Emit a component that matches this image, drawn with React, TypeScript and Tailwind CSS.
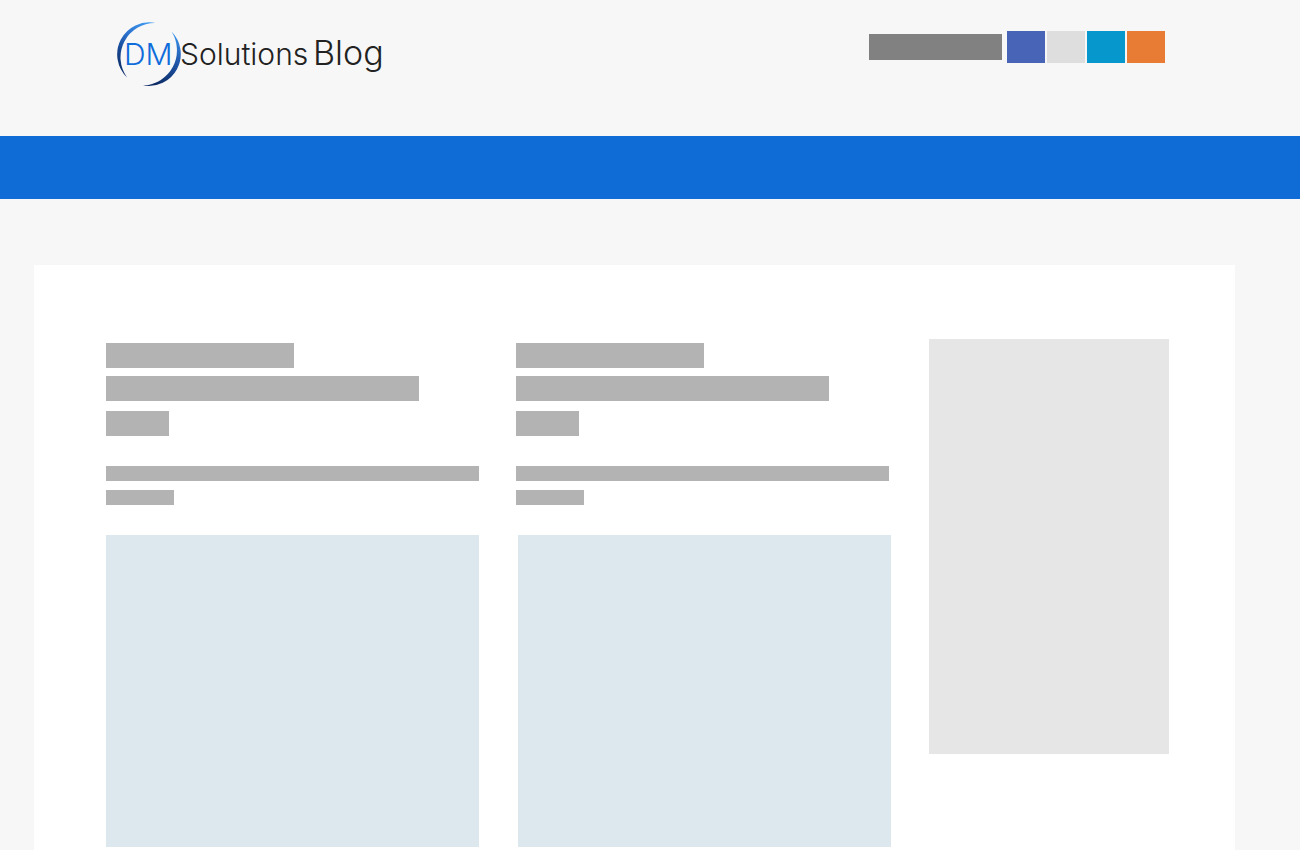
import { clsx } from "clsx"

function Block({ className }: { className?: string }) {
  return <div className={clsx("max-w-full", className)} />
}

function Logo() {
  return (
    <svg
      width="270"
      height="68"
      viewBox="0 0 270 68"
      role="img"
      aria-label="DM Solutions Blog"
      className="shrink-0"
    >
      <defs>
        <linearGradient id="arc-left" x1="0.8" y1="0" x2="0.2" y2="1">
          <stop offset="0" stopColor="#3f9af0" />
          <stop offset="0.4" stopColor="#2a70cc" />
          <stop offset="0.7" stopColor="#164590" />
          <stop offset="1" stopColor="#0d2c66" />
        </linearGradient>
        <linearGradient id="arc-right" x1="0.7" y1="0" x2="0.5" y2="1">
          <stop offset="0" stopColor="#3a94ec" />
          <stop offset="0.5" stopColor="#1f57ab" />
          <stop offset="1" stopColor="#0d2c66" />
        </linearGradient>
      </defs>
      <path d="M39 3A32 32 0 0 0 10.5 57.5A34.3 34.3 0 0 1 39 3Z" fill="url(#arc-left)" transform="translate(0.6 0)" />
      <path d="M55.5 11.5A32 32 0 0 1 27 65.5A35.2 35.2 0 0 0 55.5 11.5Z" fill="url(#arc-right)" />
      <g fontFamily="Inter, 'Liberation Sans', sans-serif" fontWeight="300">
        <text x="8" y="45" fontSize="30" fill="#0f6cdb">DM</text>
        <text x="64" y="45" fontSize="30" fill="#222222">Solutions</text>
        <text x="197" y="45" fontSize="34" fill="#222222">Blog</text>
      </g>
    </svg>
  )
}

function Header() {
  return (
    <header className="flex h-[136px] items-start justify-between pt-5 pr-[135px] pl-[116px]">
      <Logo />
      <div className="mt-[11px] flex items-center gap-[5px]">
        <Block className="h-[26px] w-[133px] bg-[#818181]" />
        <div className="flex gap-0.5">
          <Block className="h-8 w-[38px] bg-[#4864b6]" />
          <Block className="h-8 w-[38px] bg-[#dedede]" />
          <Block className="h-8 w-[38px] bg-[#0698cc]" />
          <Block className="h-8 w-[38px] bg-[#e87c34]" />
        </div>
      </div>
    </header>
  )
}

function PostSkeleton({ thumbClassName }: { thumbClassName?: string }) {
  return (
    <article className="min-w-0 pt-1">
      <Block className="h-[25px] w-[188px] bg-[#b3b3b3]" />
      <Block className="mt-2 h-[25px] w-[313px] bg-[#b3b3b3]" />
      <Block className="mt-2.5 h-[25px] w-[63px] bg-[#b3b3b3]" />
      <Block className="mt-[30px] h-[15px] w-[373px] bg-[#b3b3b3]" />
      <Block className="mt-[9px] h-[15px] w-[68px] bg-[#b3b3b3]" />
      <Block className={clsx("mt-[30px] h-[312px] bg-[#dde8ee]", thumbClassName)} />
    </article>
  )
}

export default function App() {
  return (
    <div className="flex min-h-screen flex-col bg-[#f7f7f7]">
      <Header />
      <nav className="h-[63px] bg-[#0f6bd5]" />
      <main className="mt-[66px] mr-[65px] ml-[34px] flex flex-1 items-start gap-[38px] bg-white pt-[74px] pr-[66px] pl-[72px]">
        <div className="grid flex-1 grid-cols-[373fr_375fr] gap-[37px]">
          <PostSkeleton />
          <PostSkeleton thumbClassName="ml-0.5" />
        </div>
        <aside className="h-[415px] w-60 shrink-0 bg-[#e6e6e6]" />
      </main>
    </div>
  )
}
